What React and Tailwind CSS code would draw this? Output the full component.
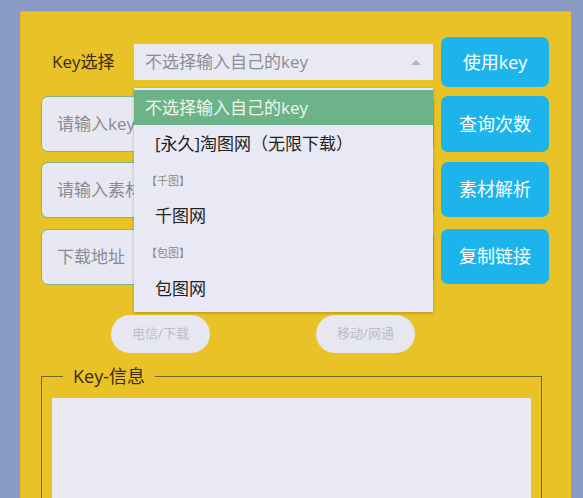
import React from "react";

const font = { fontFamily: '"Open Sans", "Noto Sans CJK SC", sans-serif' };

function Btn({ children, h }) {
  return (
    <button className={`w-[108px] ${h} shrink-0 rounded-[7px] bg-[#1db4ec] text-[18px] text-white`}>
      {children}
    </button>
  );
}

function Input({ placeholder }) {
  return (
    <div className="flex h-[56px] w-[393px] items-center rounded-[7px] border border-[#7fb38a] bg-[#e8e8f3] pl-[15px] text-[17px] text-[#8a8a95]">
      {placeholder}
    </div>
  );
}

export default function App() {
  return (
    <div className="h-[498px] w-[583px] overflow-hidden bg-[#8a9bc6] pl-[20px] pt-[11px]" style={font}>
      <div className="h-[500px] w-[551px] border-l border-t border-[#d9b52a] bg-[#e8c227] pl-[20px] pt-[25px]">
        {/* Row 1 */}
        <div className="flex items-center">
          <div className="w-[93px] pl-[11px] text-[17px] text-[#3a2e10]">Key选择</div>
          <div className="relative">
            <div className="flex h-[36px] w-[299px] items-center justify-between bg-[#e9e9f3] pl-[11px] pr-[12px] text-[17px] text-[#8d8d98]">
              <span>不选择输入自己的key</span>
              <span className="h-0 w-0 border-x-[5px] border-b-[5px] border-x-transparent border-b-[#b5b5bd]" />
            </div>
            <div className="absolute left-0 top-[44px] z-10 w-[299px] bg-[#e9e9f5] pb-[4px] pt-[2px] shadow-[0_1px_3px_rgba(0,0,0,0.25)]">
              <div className="flex h-[35px] items-center bg-[#6cb38a] pl-[11px] text-[17px] text-[#edf6ea]">不选择输入自己的key</div>
              <div className="flex h-[38px] items-center pl-[21px] text-[17px] text-[#222]">[永久]淘图网（无限下载）</div>
              <div className="flex h-[34px] items-center pl-[12px] text-[11px] leading-none text-[#8a8a8a]">【千图】</div>
              <div className="flex h-[38px] items-center pl-[21px] text-[17px] text-[#222]">千图网</div>
              <div className="flex h-[34px] items-center pl-[12px] text-[11px] leading-none text-[#8a8a8a]">【包图】</div>
              <div className="flex h-[39px] items-center pl-[21px] text-[17px] text-[#222]">包图网</div>
            </div>
          </div>
          <div className="ml-[8px]">
            <Btn h="h-[50px]">使用key</Btn>
          </div>
        </div>
        {/* Rows 2-4 */}
        <div className="mt-[9px] flex gap-[7px]">
          <Input placeholder="请输入key" />
          <Btn h="h-[56px]">查询次数</Btn>
        </div>
        <div className="mt-[10px] flex gap-[7px]">
          <Input placeholder="请输入素材链接" />
          <Btn h="h-[55px]">素材解析</Btn>
        </div>
        <div className="mt-[11px] flex gap-[7px]">
          <Input placeholder="下载地址" />
          <Btn h="h-[55px]">复制链接</Btn>
        </div>
        {/* Pills */}
        <div className="mt-[30px] flex">
          <div className="ml-[70px] flex h-[38px] w-[99px] items-center justify-center rounded-full bg-[#e6e7f1] text-[13px] text-[#bcbdc8]">电信/下载</div>
          <div className="ml-[106px] flex h-[38px] w-[99px] items-center justify-center rounded-full bg-[#e6e7f1] text-[13px] text-[#bcbdc8]">移动/网通</div>
        </div>
        {/* Fieldset */}
        <fieldset className="mt-[10px] w-[501px] border border-[#6b6a2a] px-[10px] pb-[10px] pt-[8px]">
          <legend className="ml-[11px] px-[10px] text-[18px] text-[#3a2e10]">Key-信息</legend>
          <div className="h-[120px] w-[479px] bg-[#e8e9f3]" />
        </fieldset>
      </div>
    </div>
  );
}
